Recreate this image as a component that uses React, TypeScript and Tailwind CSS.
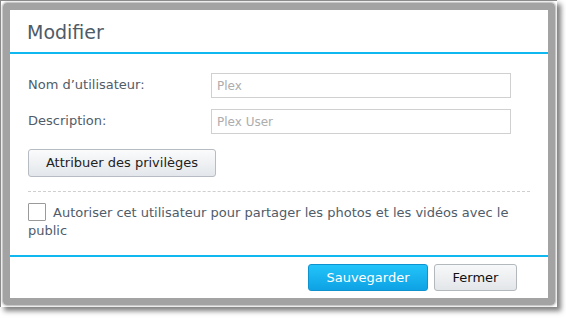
import React from "react";

export default function App() {
  const font = { fontFamily: '"DejaVu Sans", Verdana, sans-serif' };
  return (
    <div className="w-[566px] h-[319px] bg-white overflow-hidden" style={font}>
      <div className="w-[557px] h-[307px] border-t border-l border-[#8a8a8a] bg-white p-[2px] shadow-[4px_4px_5px_rgba(0,0,0,0.5)]">
        <div className="w-full h-full rounded-[4px] border-[7px] border-[#a3a3a3] shadow-[0_0_2px_1px_#b5b5b5]">
          <div className="w-full h-full bg-white flex flex-col">
            <div className="h-[44px] flex items-center pl-[17px] pt-[3px] border-b-2 border-[#0fb9f0] shrink-0">
              <span className="text-[19px] text-[#4f5b68]">Modifier</span>
            </div>
            <div className="flex-1 flex flex-col px-[18px] pt-[19px]">
              <div className="flex items-center h-[25px]">
                <div className="w-[183px] text-[13px] text-[#505c69] pb-[2px]">Nom d’utilisateur:</div>
                <div className="w-[300px] h-[25px] border border-[#d0d0d0] flex items-center pl-[5px] text-[12px] text-[#adadad]">Plex</div>
              </div>
              <div className="flex items-center h-[25px] mt-[11px]">
                <div className="w-[183px] text-[13px] text-[#505c69] pb-[2px]">Description:</div>
                <div className="w-[300px] h-[25px] border border-[#d0d0d0] flex items-center pl-[5px] text-[12px] text-[#adadad]">Plex User</div>
              </div>
              <div className="mt-[15px]">
                <div className="w-[188px] h-[28px] rounded-[3px] border border-[#b7bcc2] bg-gradient-to-b from-[#fbfbfc] to-[#e3e7eb] flex items-center justify-center text-[13px] text-[#222]">
                  Attribuer des privilèges
                </div>
              </div>
              <div className="mt-[14px] border-t border-dashed border-[#cfcfcf] w-[502px]" />
              <div className="mt-[11px] text-[13px] leading-[18px] text-[#505c69] w-[490px]">
                <span className="inline-block w-[18px] h-[18px] border border-[#9a9a9a] rounded-[1px] align-[-4px] mr-[7px] bg-white" />
                Autoriser cet utilisateur pour partager les photos et les vidéos avec le public
              </div>
            </div>
            <div className="shrink-0 border-t-2 border-[#0fb9f0] h-[43px] flex items-center justify-end pr-[31px] gap-[6px]">
              <div className="w-[120px] h-[27px] rounded-[3px] border border-[#0e93cf] bg-gradient-to-b from-[#22c4fa] to-[#0ea2e4] flex items-center justify-center text-[13px] text-white">
                Sauvegarder
              </div>
              <div className="w-[83px] h-[27px] rounded-[3px] border border-[#b3b8bd] bg-gradient-to-b from-[#f7f8f9] to-[#e3e6e9] flex items-center justify-center text-[13px] text-[#111]">
                Fermer
              </div>
            </div>
          </div>
        </div>
      </div>
    </div>
  );
}
